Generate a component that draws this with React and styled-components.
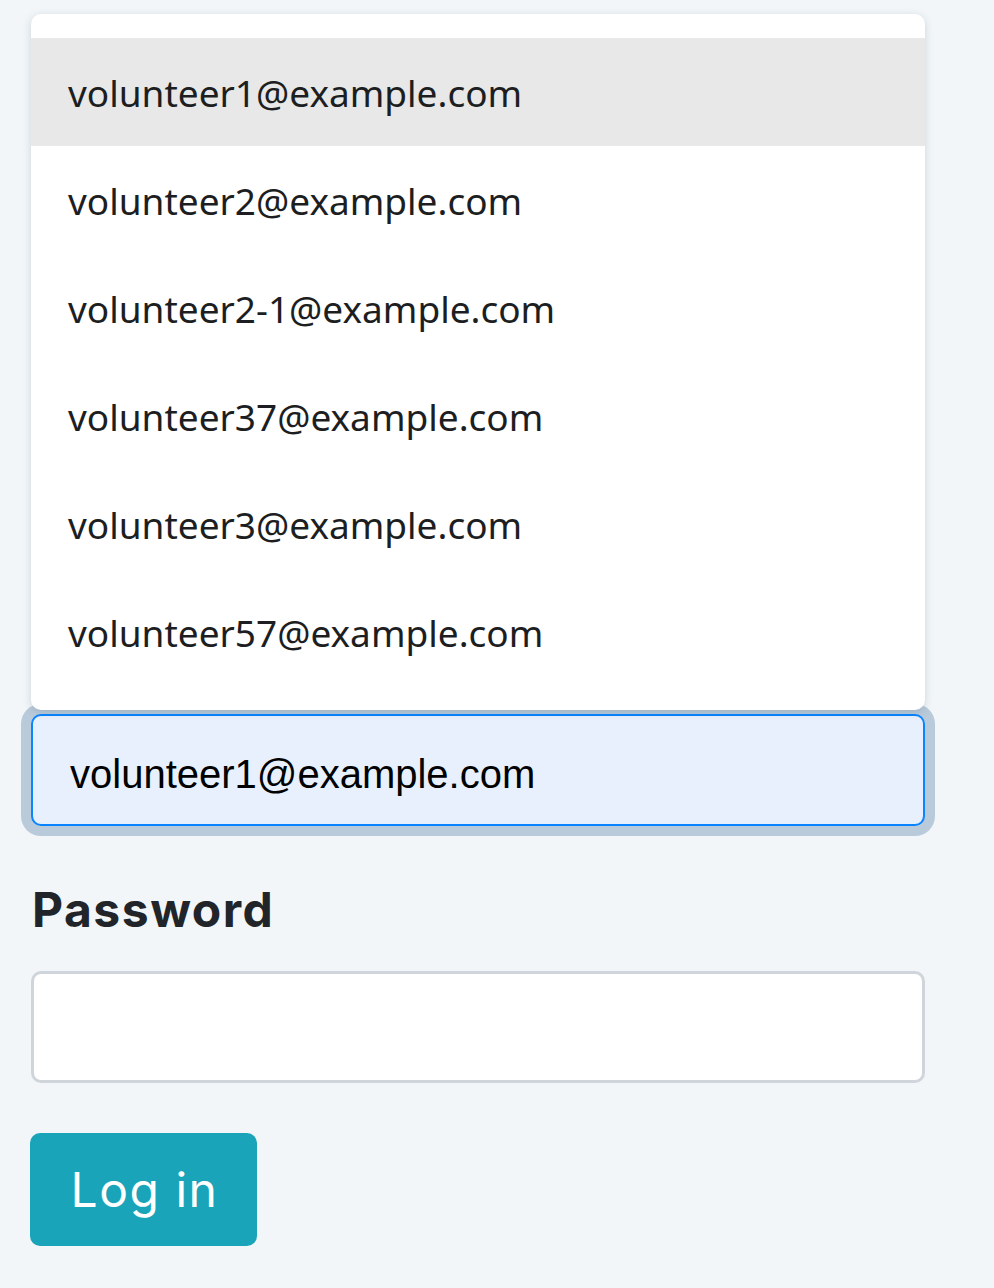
import styled, { createGlobalStyle } from 'styled-components';

const GlobalStyle = createGlobalStyle`
  html, body {
    margin: 0;
    padding: 0;
    background: #f2f6f9;
  }
`;

const Page = styled.div`
  min-height: 100vh;
  padding: 0 69px 40px 31px;
  box-sizing: border-box;
`;

const Form = styled.form`
  width: 894px;
  display: flex;
  flex-direction: column;
`;

const FieldGroup = styled.div`
  display: flex;
  flex-direction: column;
  padding-top: ${(p) => p.$top || 0}px;
  margin-bottom: ${(p) => p.$gap || 0}px;
`;

const Label = styled.label`
  font-family: Inter, 'Liberation Sans', sans-serif;
  font-weight: 700;
  font-size: 48px;
  letter-spacing: 1.5px;
  line-height: 60px;
  color: #212529;
  margin: 0 0 31px 1px;
`;

const InputWrap = styled.div`
  position: relative;
`;

const TextInput = styled.input`
  display: block;
  width: 100%;
  height: 112px;
  box-sizing: border-box;
  border-radius: 10px;
  padding: 8px 37px 0;
  font-family: 'Liberation Sans', Arial, sans-serif;
  font-size: 40px;
  color: #000;
  outline: none;
  border: ${(p) => (p.$focused ? '2px solid #0a84ff' : '3px solid #d0d5db')};
  background: ${(p) => (p.$focused ? '#e8f0fd' : '#ffffff')};
  box-shadow: ${(p) => (p.$focused ? '0 0 0 10px #b9cbdb' : 'none')};
`;

const Suggestions = styled.ul`
  position: absolute;
  left: 0;
  right: 0;
  bottom: calc(100% + 4px);
  margin: 0;
  padding: 24px 0;
  list-style: none;
  background: #ffffff;
  border-radius: 10px;
  box-shadow: 0 2px 8px rgba(40, 60, 80, 0.18);
  z-index: 2;
`;

const Suggestion = styled.li`
  height: 108px;
  display: flex;
  align-items: center;
  padding: 0 37px;
  font-family: 'Noto Sans', 'Open Sans', sans-serif;
  font-size: 37px;
  color: #1c1e21;
  background: ${(p) => (p.$active ? '#e8e8e8' : 'transparent')};
`;

const Button = styled.button`
  align-self: flex-start;
  width: 227px;
  height: 113px;
  padding: 0 0 0 2px;
  border: none;
  border-radius: 10px;
  background: #19a4b9;
  color: #ffffff;
  font-family: Inter, 'Liberation Sans', sans-serif;
  font-size: 48px;
  letter-spacing: 1.5px;
  font-weight: 400;
  margin-left: -1px;
`;

const emails = [
  'volunteer1@example.com',
  'volunteer2@example.com',
  'volunteer2-1@example.com',
  'volunteer37@example.com',
  'volunteer3@example.com',
  'volunteer57@example.com',
];

export default function App() {
  return (
    <>
      <GlobalStyle />
      <Page>
        <Form onSubmit={(e) => e.preventDefault()}>
          <FieldGroup $top={714} $gap={54}>
            <InputWrap>
              <Suggestions>
                {emails.map((email, i) => (
                  <Suggestion key={email} $active={i === 0}>
                    {email}
                  </Suggestion>
                ))}
              </Suggestions>
              <TextInput
                id="email"
                type="email"
                aria-label="Email address"
                $focused
                defaultValue="volunteer1@example.com"
              />
            </InputWrap>
          </FieldGroup>
          <FieldGroup $gap={50}>
            <Label htmlFor="password">Password</Label>
            <TextInput id="password" type="password" />
          </FieldGroup>
          <Button type="submit">Log in</Button>
        </Form>
      </Page>
    </>
  );
}
